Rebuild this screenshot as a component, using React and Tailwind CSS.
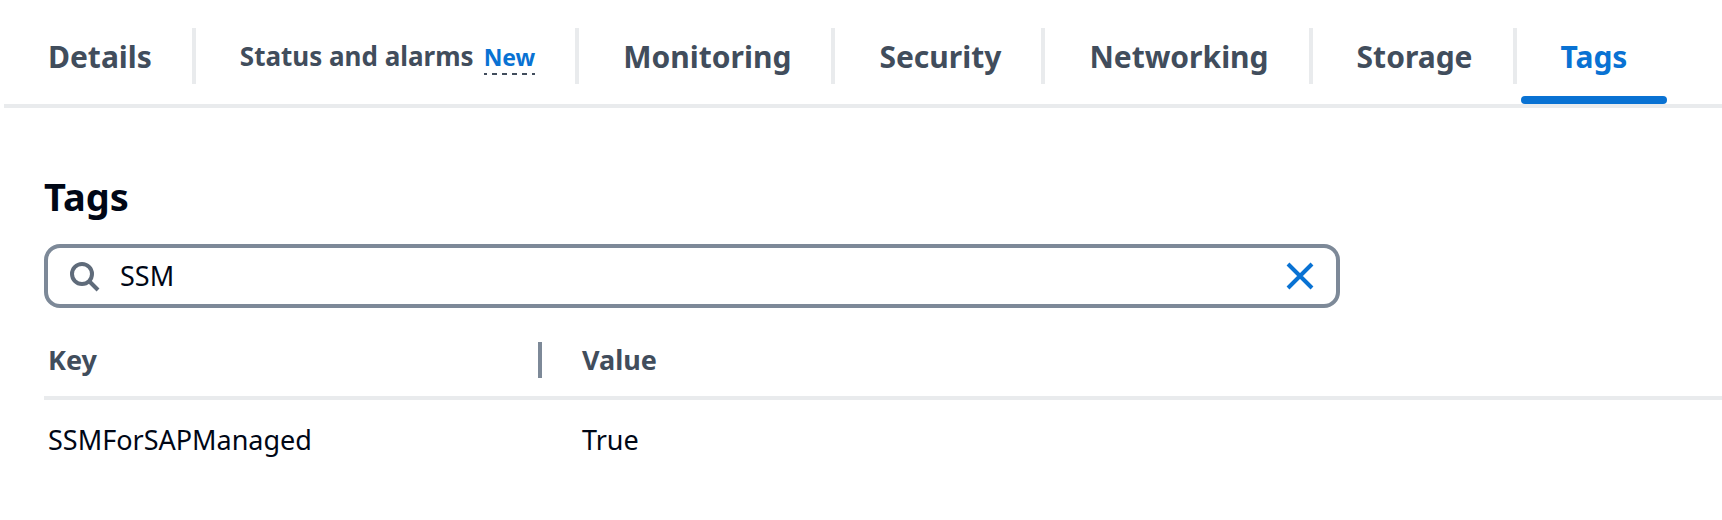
import { useState } from 'react';

const TABS = [
  { id: 'details', label: 'Details' },
  { id: 'status', label: 'Status and alarms', isNew: true },
  { id: 'monitoring', label: 'Monitoring' },
  { id: 'security', label: 'Security' },
  { id: 'networking', label: 'Networking' },
  { id: 'storage', label: 'Storage' },
  { id: 'tags', label: 'Tags' },
];

const TAGS = [{ key: 'SSMForSAPManaged', value: 'True' }];

function SearchIcon() {
  return (
    <svg className="size-8 shrink-0" viewBox="0 0 32 32" fill="none" stroke="#5f6b7a" strokeWidth="4" aria-hidden="true">
      <circle cx="14" cy="14" r="10" />
      <path d="M21 21l9 9" />
    </svg>
  );
}

function CloseIcon() {
  return (
    <svg className="size-8" viewBox="0 0 32 32" fill="none" stroke="#0972d3" strokeWidth="4" aria-hidden="true">
      <path d="M4 4l24 24M28 4L4 28" />
    </svg>
  );
}

function Tab({ tab, active, onSelect }) {
  return (
    <button
      type="button"
      role="tab"
      aria-selected={active}
      onClick={onSelect}
      className={`relative flex h-24 items-center px-10 text-[30px] font-bold whitespace-nowrap ${
        active ? 'text-[#0972d3]' : 'text-[#414d5c]'
      }`}
    >
      {tab.isNew ? (
        <span className="flex items-baseline gap-2.5 text-[26px] leading-10">
          {tab.label}
          <span className="bg-[repeating-linear-gradient(90deg,#414d5c_0_3px,transparent_3px_8px,#414d5c_8px_10px)] bg-[length:100%_2px] bg-bottom bg-no-repeat pb-1 text-[23px] leading-7 text-[#0972d3]">
            New
          </span>
        </span>
      ) : (
        tab.label
      )}
      {active && <span className="absolute inset-x-0 bottom-0 h-2 rounded-full bg-[#0972d3]" />}
    </button>
  );
}

export default function App() {
  const [activeTab, setActiveTab] = useState('tags');
  const [query, setQuery] = useState('SSM');

  const rows = TAGS.filter((tag) => tag.key.toLowerCase().includes(query.toLowerCase()));

  return (
    <div className="min-h-screen bg-white pt-2 font-['Noto_Sans',sans-serif] text-[#000716]">
      <div role="tablist" className="ml-1 flex border-b-4 border-[#e9ebed]">
        {TABS.map((tab, i) => (
          <div key={tab.id} role="presentation" className="flex items-center pl-1">
            <Tab tab={tab} active={tab.id === activeTab} onSelect={() => setActiveTab(tab.id)} />
            {i < TABS.length - 1 && <span className="h-14 w-1 bg-[#e9ebed]" />}
          </div>
        ))}
      </div>

      <main className="pt-16 pl-11">
        <h2 className="mb-6 text-[38px] leading-12 font-bold">Tags</h2>

        <div className="flex h-16 max-w-[1296px] items-center gap-5 rounded-2xl border-4 border-[#7d8998] px-5">
          <label htmlFor="tag-filter">
            <SearchIcon />
          </label>
          <input
            id="tag-filter"
            type="text"
            aria-label="Filter tags"
            value={query}
            onChange={(e) => setQuery(e.target.value)}
            className="min-w-0 flex-1 text-[27px] outline-none"
          />
          <button type="button" aria-label="Clear filter" onClick={() => setQuery('')}>
            <CloseIcon />
          </button>
        </div>

        <table className="mt-4 w-full table-fixed text-left">
          <thead>
            <tr className="border-b-4 border-[#e9ebed] text-[27px] leading-9 text-[#414d5c]">
              <th scope="col" className="w-[498px] py-[18px] pl-1 font-bold">
                <div className="border-r-4 border-[#7d8998]">Key</div>
              </th>
              <th scope="col" className="py-[18px] pl-10 font-bold">Value</th>
            </tr>
          </thead>
          <tbody>
            {rows.map((tag) => (
              <tr key={tag.key} className="text-[27px] leading-10">
                <td className="py-5 pl-1">{tag.key}</td>
                <td className="py-5 pl-10">{tag.value}</td>
              </tr>
            ))}
          </tbody>
        </table>
      </main>
    </div>
  );
}
